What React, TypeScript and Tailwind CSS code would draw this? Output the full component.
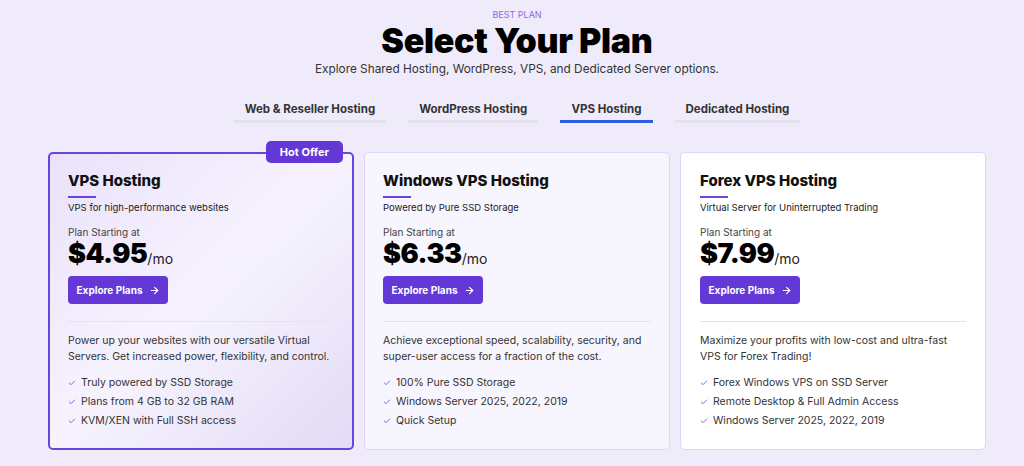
import { ArrowRight, Check } from "lucide-react";

const tabs = ["Web & Reseller Hosting", "WordPress Hosting", "VPS Hosting", "Dedicated Hosting"];

const plans = [
  {
    title: "VPS Hosting",
    tagline: "VPS for high-performance websites",
    price: "$4.95",
    desc: "Power up your websites with our versatile Virtual Servers. Get increased power, flexibility, and control.",
    features: ["Truly powered by SSD Storage", "Plans from 4 GB to 32 GB RAM", "KVM/XEN with Full SSH access"],
    hot: true,
  },
  {
    title: "Windows VPS Hosting",
    tagline: "Powered by Pure SSD Storage",
    price: "$6.33",
    desc: "Achieve exceptional speed, scalability, security, and super-user access for a fraction of the cost.",
    features: ["100% Pure SSD Storage", "Windows Server 2025, 2022, 2019", "Quick Setup"],
    hot: false,
  },
  {
    title: "Forex VPS Hosting",
    tagline: "Virtual Server for Uninterrupted Trading",
    price: "$7.99",
    desc: "Maximize your profits with low-cost and ultra-fast VPS for Forex Trading!",
    features: ["Forex Windows VPS on SSD Server", "Remote Desktop & Full Admin Access", "Windows Server 2025, 2022, 2019"],
    hot: false,
  },
];

function PlanCard({ plan, index }: { plan: (typeof plans)[number]; index: number }) {
  const box =
    index === 0
      ? "border-2 border-[#6a45d9] bg-gradient-to-br from-[#ebe2fa] via-[#f6f3fe] to-[#e2dbf5] px-[18px] pt-[17px]"
      : index === 1
        ? "border border-[#ddd6f6] bg-[#f7f5fe] px-[18px] pt-[18px]"
        : "border border-[#ddd6f6] bg-white px-[19px] pt-[18px]";
  return (
    <div className={`relative rounded-[5px] pb-[19px] ${box}`}>
      {plan.hot && (
        <div className="absolute -top-[13px] right-[9px] rounded-[5px] bg-[#6338d6] px-[14px] py-[4px] text-[11px] font-bold leading-[14px] text-white">
          Hot Offer
        </div>
      )}
      <h3 className="text-[15px] font-extrabold leading-[20px] text-[#111]">{plan.title}</h3>
      <div className="mt-[5px] h-[2px] w-[28px] bg-[#6a45d9]" />
      <p className="mt-[3px] text-[9.5px] leading-[14px] text-[#222]">{plan.tagline}</p>
      <p className="mt-[10px] text-[10px] leading-[14px] text-[#444]">Plan Starting at</p>
      <div className="flex items-end leading-none">
        <span className="text-[27px] font-black leading-[30px] tracking-[-0.5px] text-black">{plan.price}</span>
        <span className="mb-[3px] text-[14px] text-[#222]">/mo</span>
      </div>
      <button className="mt-[7px] flex h-[28px] w-[100px] items-center justify-center gap-[6px] rounded-[4px] bg-[#6338d6] text-[10px] font-bold text-white">
        Explore Plans <ArrowRight size={11} strokeWidth={2.5} />
      </button>
      <div className="mt-[17px] h-px bg-[#e6e1f3]" />
      <p className="mt-[11px] text-[10.5px] leading-[16px] text-[#333]">{plan.desc}</p>
      <ul className="mt-[10px] flex flex-col gap-[3px]">
        {plan.features.map((f) => (
          <li key={f} className="flex items-center gap-[5px] text-[10.5px] leading-[16px] text-[#333]">
            <Check size={8} strokeWidth={2.5} className="text-[#6a45d9]" />
            {f}
          </li>
        ))}
      </ul>
    </div>
  );
}

export default function App() {
  return (
    <div className="min-h-[466px] w-full bg-[#efebfb] font-['Inter',sans-serif]">
      <div className="ml-[48px] w-[938px]">
        <div className="flex flex-col items-center pt-[9px]">
          <p className="text-[9px] uppercase leading-[12px] text-[#8a6be6]">Best Plan</p>
          <h1 className="mt-[2px] text-[34px] font-black leading-[36px] tracking-[-0.3px] text-black">Select Your Plan</h1>
          <p className="mt-[2px] text-[11.8px] leading-[16px] text-[#333]">
            Explore Shared Hosting, WordPress, VPS, and Dedicated Server options.
          </p>
          <div className="mt-[24px] flex gap-[22px]">
            {tabs.map((t) => {
              const active = t === "VPS Hosting";
              return (
                <div
                  key={t}
                  className={`px-[11px] pb-[3px] text-[11.5px] font-bold leading-[16px] text-[#333] ${
                    active ? "border-b-[3px] border-[#2f5be0]" : "border-b-[3px] border-[#e4e1ee]"
                  }`}
                >
                  {t}
                </div>
              );
            })}
          </div>
        </div>
        <div className="mt-[29px] grid grid-cols-3 gap-[10px]">
          {plans.map((p, i) => (
            <PlanCard key={p.title} plan={p} index={i} />
          ))}
        </div>
      </div>
    </div>
  );
}
